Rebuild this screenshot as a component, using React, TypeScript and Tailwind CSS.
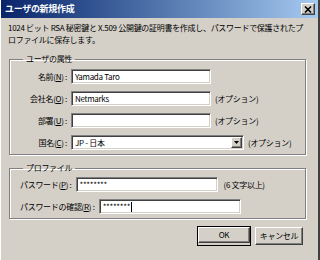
import React from "react";

const sunken =
  "bg-white border border-[#808080] border-b-white border-r-white shadow-[inset_1px_1px_0_#404040,inset_-1px_-1px_0_#d4d0c8]";
const raised =
  "bg-[#d4d0c8] border border-white border-b-[#404040] border-r-[#404040] shadow-[inset_-1px_-1px_0_#808080]";

function Label({ text, k, width }: { text: string; k: string; width: string }) {
  return (
    <span className={`${width} text-right whitespace-nowrap shrink-0`}>
      {text}(<span className="underline">{k}</span>) :
    </span>
  );
}

function Opt() {
  return <span className="whitespace-nowrap">(オプション)</span>;
}

export default function App() {
  return (
    <div className="w-[320px] h-[260px] overflow-hidden bg-[#d4d0c8] font-['Noto_Sans_CJK_JP',sans-serif] text-[8px] tracking-[-0.3px] leading-[12px] text-black flex flex-col border-l border-l-white border-r-2 border-r-[#404040]">
      <div className="h-[18px] shrink-0 flex items-center justify-between pl-[4px] pr-[3px] bg-linear-to-r from-[#0a246a] to-[#a6caf0]">
        <span className="text-white font-bold text-[9px] tracking-[-0.3px]">ユーザの新規作成</span>
        <div className={`${raised} w-[14px] h-[12px] flex items-center justify-center`}>
          <svg width="8" height="7" viewBox="0 0 8 7">
            <path d="M1 0.5 L7 6.5 M7 0.5 L1 6.5" stroke="#000" strokeWidth="1.6" />
          </svg>
        </div>
      </div>

      <div className="pl-[7px] pt-[4px] whitespace-nowrap">
        <div>1024 ビット RSA 秘密鍵と X.509 公開鍵の証明書を作成し、パスワードで保護されたプ</div>
        <div>ロファイルに保存します。</div>
      </div>

      <fieldset className="ml-[8px] mr-[12px] mt-[7px] border border-[#808080] shadow-[1px_1px_0_#fff,inset_1px_1px_0_#fff] px-[0px] pt-[4px] pb-[4px] min-w-0">
        <legend className="ml-[13px] px-[3px]">ユーザの属性</legend>
        <div className="flex flex-col gap-[7px]">
          <div className="flex items-center gap-[4px]">
            <Label text="名前" k="N" width="w-[57px]" />
            <div className={`${sunken} w-[140px] h-[15px] flex items-center pl-[3px]`}>Yamada Taro</div>
          </div>
          <div className="flex items-center gap-[4px]">
            <Label text="会社名" k="O" width="w-[57px]" />
            <div className={`${sunken} w-[140px] h-[15px] flex items-center pl-[3px]`}>Netmarks</div>
            <Opt />
          </div>
          <div className="flex items-center gap-[4px]">
            <Label text="部署" k="U" width="w-[57px]" />
            <div className={`${sunken} w-[140px] h-[15px]`}></div>
            <Opt />
          </div>
          <div className="flex items-center gap-[4px]">
            <Label text="国名" k="C" width="w-[57px]" />
            <div className={`${sunken} w-[173px] h-[15px] flex items-center justify-between pl-[3px] pr-[1px]`}>
              <span>JP - 日本</span>
              <div className={`${raised} w-[11px] h-[11px] flex items-center justify-center`}>
                <svg width="5" height="3" viewBox="0 0 5 3">
                  <path d="M0 0 H5 L2.5 3 Z" fill="#000" />
                </svg>
              </div>
            </div>
            <Opt />
          </div>
        </div>
      </fieldset>

      <fieldset className="ml-[8px] mr-[12px] mt-[7px] border border-[#808080] shadow-[1px_1px_0_#fff,inset_1px_1px_0_#fff] pl-[10px] pt-[3px] pb-[4px] min-w-0">
        <legend className="ml-[3px] px-[3px]">プロファイル</legend>
        <div className="flex flex-col gap-[7px]">
          <div className="flex items-center gap-[4px]">
            <Label text="パスワード" k="P" width="" />
            <div className={`${sunken} w-[142px] h-[15px] flex items-center pl-[3px]`}>********</div>
            <span className="whitespace-nowrap pl-[2px]">(6 文字以上)</span>
          </div>
          <div className="flex items-center gap-[4px]">
            <Label text="パスワードの確認" k="R" width="" />
            <div className={`${sunken} w-[142px] h-[15px] flex items-center pl-[3px]`}>
              ********<span className="inline-block w-px h-[10px] bg-black ml-px"></span>
            </div>
          </div>
        </div>
      </fieldset>

      <div className="flex justify-end gap-[5px] mr-[15px] mt-[8px]">
        <div className="outline outline-1 outline-black">
          <div className={`${raised} w-[52px] h-[16px] flex items-center justify-center`}>OK</div>
        </div>
        <div className={`${raised} w-[48px] h-[18px] flex items-center justify-center`}>キャンセル</div>
      </div>
    </div>
  );
}
